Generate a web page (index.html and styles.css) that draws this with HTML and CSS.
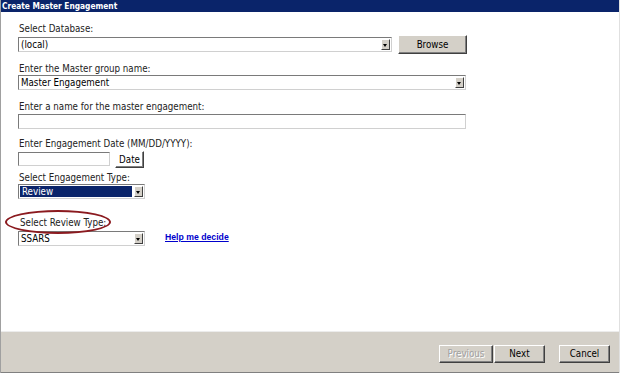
FILE: index.html
```html
<!DOCTYPE html>
<html>
<head>
<meta charset="utf-8">
<link rel="stylesheet" href="styles.css">
</head>
<body>
<div class="window">
  <div class="titlebar">Create Master Engagement</div>
  <div class="content">
    <div class="field f1">
      <div class="label">Select Database:</div>
      <div class="row">
        <div class="combo w-db"><span class="val">(local)</span><span class="arrow"></span></div>
        <div class="btn browse">Browse</div>
      </div>
    </div>
    <div class="field f2">
      <div class="label">Enter the Master group name:</div>
      <div class="combo w-full"><span class="val">Master Engagement</span><span class="arrow"></span></div>
    </div>
    <div class="field f3">
      <div class="label">Enter a name for the master engagement:</div>
      <div class="textbox w-full"></div>
    </div>
    <div class="field f4">
      <div class="label">Enter Engagement Date (MM/DD/YYYY):</div>
      <div class="row">
        <div class="textbox w-date"></div>
        <div class="btn datebtn">Date</div>
      </div>
    </div>
    <div class="field f5">
      <div class="label">Select Engagement Type:</div>
      <div class="combo w-small"><span class="val selected">Review</span><span class="arrow"></span></div>
    </div>
    <div class="field f6">
      <div class="label ringed">Select Review Type:<span class="ring"></span></div>
      <div class="row">
        <div class="combo w-small"><span class="val">SSARS</span><span class="arrow"></span></div>
        <a class="help" href="#">Help me decide</a>
      </div>
    </div>
  </div>
  <div class="footer">
    <div class="btn fbtn prev disabled">Previous</div>
    <div class="btn fbtn next">Next</div>
    <div class="btn fbtn cancel">Cancel</div>
  </div>
</div>
</body>
</html>
```

FILE: styles.css
```css
html, body {
  margin: 0;
  padding: 0;
  width: 620px;
  height: 373px;
  overflow: hidden;
  background: #ffffff;
}
.window {
  width: 620px;
  height: 373px;
  display: flex;
  flex-direction: column;
  box-sizing: border-box;
  border-left: 1px solid #a0a0a0;
  border-right: 1px solid #e0e0e0;
  font-family: "DejaVu Sans Condensed", "DejaVu Sans", sans-serif;
  font-size: 9.7px;
  color: #000;
}
.titlebar {
  height: 12px;
  line-height: 12px;
  background: #0a246a;
  color: #ffffff;
  font-weight: bold;
  font-size: 8.3px;
  padding-left: 1px;
  white-space: nowrap;
}
.content {
  flex: 1;
  background: #ffffff;
  padding: 10px 0 0 17px;
  display: flex;
  flex-direction: column;
}
.label {
  height: 13px;
  line-height: 13px;
  padding-left: 1px;
  color: #222;
  white-space: nowrap;
}
.row {
  display: flex;
  align-items: center;
}
.f1 .row { height: 18px; }
.f2 { margin-top: 9px; }
.f3 { margin-top: 10px; }
.f3 .textbox { margin-top: 1px; }
.f4 { margin-top: 8px; }
.f4 .row { margin-top: 1px; height: 16px; }
.f5 { margin-top: 4px; }
.f6 { margin-top: 17px; }
.f6 .row { margin-top: 2px; }

.combo, .textbox {
  box-sizing: border-box;
  height: 15px;
  border-style: solid;
  border-width: 1px;
  border-color: #7a7a7a #d0d0d0 #d0d0d0 #7a7a7a;
  background: #ffffff;
  display: flex;
  align-items: stretch;
}
.combo .val {
  flex: 1;
  line-height: 13px;
  padding-left: 2px;
  white-space: nowrap;
}
.combo .val.selected {
  background: #0a246a;
  color: #ffffff;
  margin: 1px;
  line-height: 11px;
}
.combo .arrow {
  width: 9px;
  margin: 1px;
  box-sizing: border-box;
  background: #d4d0c8;
  border-style: solid;
  border-width: 1px;
  border-color: #ffffff #404040 #404040 #ffffff;
  position: relative;
}
.combo .arrow::after {
  content: "";
  position: absolute;
  left: 1px;
  top: 4px;
  border-left: 2.5px solid transparent;
  border-right: 2.5px solid transparent;
  border-top: 3px solid #000;
}
.w-db { width: 374px; }
.w-full { width: 448px; }
.w-date { width: 92px; height: 14px; }
.w-small { width: 127px; }

.btn {
  box-sizing: border-box;
  background: #d4d0c8;
  border-style: solid;
  border-width: 1px;
  border-color: #ffffff #404040 #404040 #ffffff;
  box-shadow: inset -1px -1px 0 #808080;
  display: flex;
  align-items: center;
  justify-content: center;
  color: #000;
}
.browse {
  width: 69px;
  height: 19px;
  margin-left: 6px;
}
.datebtn {
  width: 29px;
  height: 17px;
  margin-left: 5px;
  background: #ffffff;
}
.ringed {
  position: relative;
  padding-left: 2px;
}
.ring {
  position: absolute;
  left: -13px;
  top: -6px;
  width: 102px;
  height: 20px;
  border: 2.5px solid #8b1a1f;
  border-radius: 50%;
}
.help {
  margin-left: 20px;
  margin-top: -3px;
  color: #0000cc;
  font-weight: bold;
  text-decoration: underline;
  font-family: "Liberation Sans", Arial, sans-serif;
  font-size: 8.7px;
}
.footer {
  height: 42px;
  box-sizing: border-box;
  background: #d4d0c8;
  border-top: 1px solid #ececec;
  border-bottom: 1px solid #808080;
  display: flex;
  justify-content: flex-end;
  align-items: center;
  padding-right: 9px;
  padding-top: 3px;
}
.fbtn {
  height: 18px;
}
.prev { width: 54px; }
.next { width: 51px; margin-left: 1px; }
.cancel { width: 51px; margin-left: 14px; }
.disabled {
  color: #a0a0a0;
  text-shadow: 1px 1px 0 #ffffff;
}
```
